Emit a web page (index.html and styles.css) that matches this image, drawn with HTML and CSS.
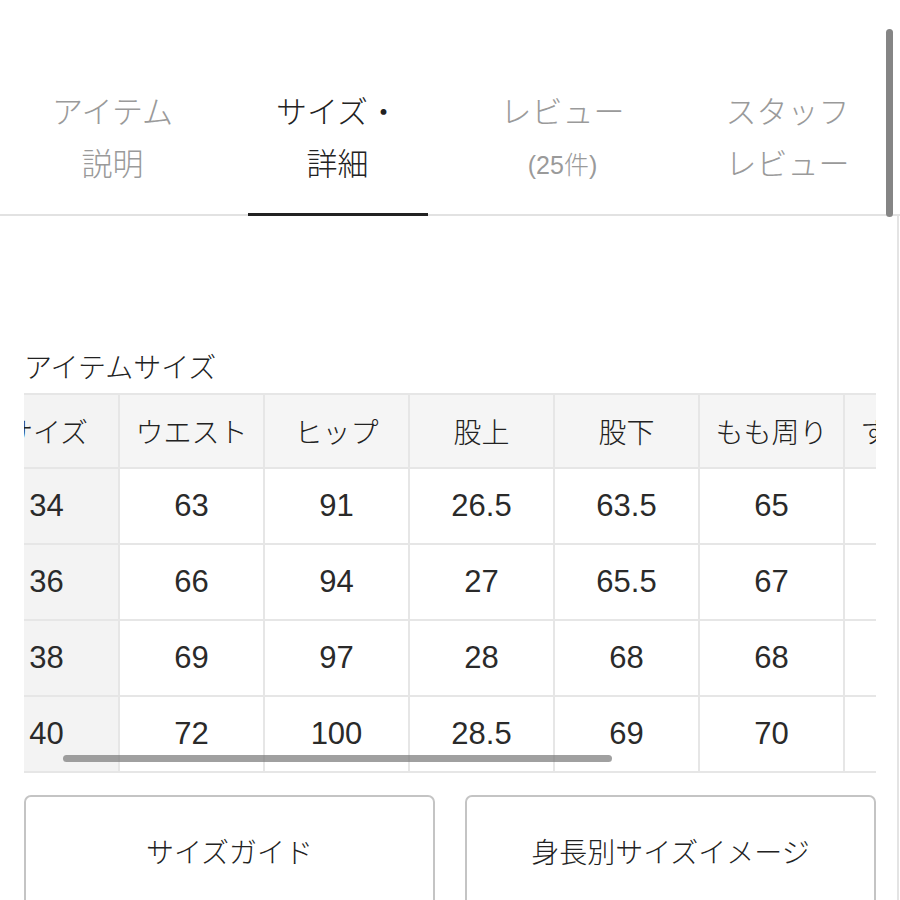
FILE: index.html
```html
<!DOCTYPE html>
<html lang="ja">
<head>
<meta charset="utf-8">
<link rel="stylesheet" href="styles.css">
</head>
<body>
<div class="page">
  <nav class="tabs">
    <div class="tab"><span>アイテム</span><span>説明</span></div>
    <div class="tab active"><span>サイズ・</span><span>詳細</span></div>
    <div class="tab"><span>レビュー</span><span class="small">(25件)</span></div>
    <div class="tab"><span>スタッフ</span><span>レビュー</span></div>
  </nav>

  <section class="content">
    <h2 class="heading">アイテムサイズ</h2>
    <div class="scroller">
      <table class="size-table">
        <thead>
          <tr><th class="first">サイズ</th><th>ウエスト</th><th>ヒップ</th><th>股上</th><th>股下</th><th>もも周り</th><th>すそ周り</th><th>総丈</th><th>膝周り</th></tr>
        </thead>
        <tbody>
          <tr><td class="first">34</td><td>63</td><td>91</td><td>26.5</td><td>63.5</td><td>65</td><td>40</td><td>90</td><td>44</td></tr>
          <tr><td class="first">36</td><td>66</td><td>94</td><td>27</td><td>65.5</td><td>67</td><td>41</td><td>92.5</td><td>45</td></tr>
          <tr><td class="first">38</td><td>69</td><td>97</td><td>28</td><td>68</td><td>68</td><td>42</td><td>96</td><td>46</td></tr>
          <tr><td class="first">40</td><td>72</td><td>100</td><td>28.5</td><td>69</td><td>70</td><td>43</td><td>97.5</td><td>47</td></tr>
        </tbody>
      </table>
      <div class="hthumb"></div>
    </div>

    <div class="buttons">
      <button class="btn">サイズガイド</button>
      <button class="btn">身長別サイズイメージ</button>
    </div>
  </section>

  <div class="vthumb"></div>
  <div class="vtrack"></div>
</div>
</body>
</html>
```

FILE: styles.css
```css
html, body {
  margin: 0;
  padding: 0;
  background: #fff;
}
body {
  font-family: "Liberation Sans", "Noto Sans CJK JP", sans-serif;
  font-weight: 300;
  color: #222;
  overflow: hidden;
}
.page {
  position: relative;
  width: 900px;
  height: 900px;
  overflow: hidden;
}
.tabs {
  display: grid;
  grid-template-columns: repeat(4, 225px);
  border-bottom: 2px solid #e2e2e2;
  height: 216px;
  box-sizing: border-box;
}
.tab {
  display: flex;
  flex-direction: column;
  align-items: center;
  padding-top: 87px;
  font-size: 31px;
  line-height: 52px;
  color: #9a9a9a;
  position: relative;
}
.tab .small {
  font-size: 25px;
}
.tab.active {
  color: #222;
}
.tab.active::after {
  content: "";
  position: absolute;
  left: 23px;
  right: 22px;
  bottom: -2px;
  height: 3px;
  background: #222;
}
.content {
  padding: 0 24px;
}
.heading {
  margin: 0;
  padding-top: 131px;
  font-size: 28px;
  font-weight: 300;
  line-height: 44px;
  height: 46px;
  color: #222;
}
.scroller {
  position: relative;
  width: 852px;
  overflow: hidden;
}
.size-table {
  margin-left: -51px;
  border-collapse: collapse;
  table-layout: fixed;
  font-size: 28px;
}
.size-table th,
.size-table td {
  width: 145px;
  min-width: 145px;
  box-sizing: border-box;
  border: 2px solid #e6e6e6;
  text-align: center;
  font-weight: 300;
  padding: 0;
  color: #222;
}
.size-table th {
  height: 74px;
  background: #f5f5f5;
}
.size-table td {
  height: 76px;
  background: #fff;
  font-size: 31px;
  color: #2a2a2a;
}
.size-table td.first,
.size-table th.first {
  background: #f3f3f3;
}
.hthumb {
  position: absolute;
  left: 39px;
  top: 362px;
  width: 549px;
  height: 7px;
  border-radius: 4px;
  background: rgba(120, 120, 120, 0.7);
}
.buttons {
  display: grid;
  grid-template-columns: 411px 411px;
  column-gap: 30px;
  margin-top: 22px;
}
.btn {
  height: 120px;
  border: 2px solid #c4c4c4;
  border-radius: 7px;
  background: #fff;
  font-family: "Liberation Sans", "Noto Sans CJK JP", sans-serif;
  font-weight: 300;
  font-size: 28px;
  color: #222;
  padding: 0 0 9px;
}
.vthumb {
  position: absolute;
  left: 886px;
  top: 29px;
  width: 7px;
  height: 188px;
  border-radius: 4px;
  background: #858585;
}
.vtrack {
  position: absolute;
  left: 897px;
  top: 216px;
  width: 2px;
  bottom: 0;
  background: #e4e4e4;
}
```
